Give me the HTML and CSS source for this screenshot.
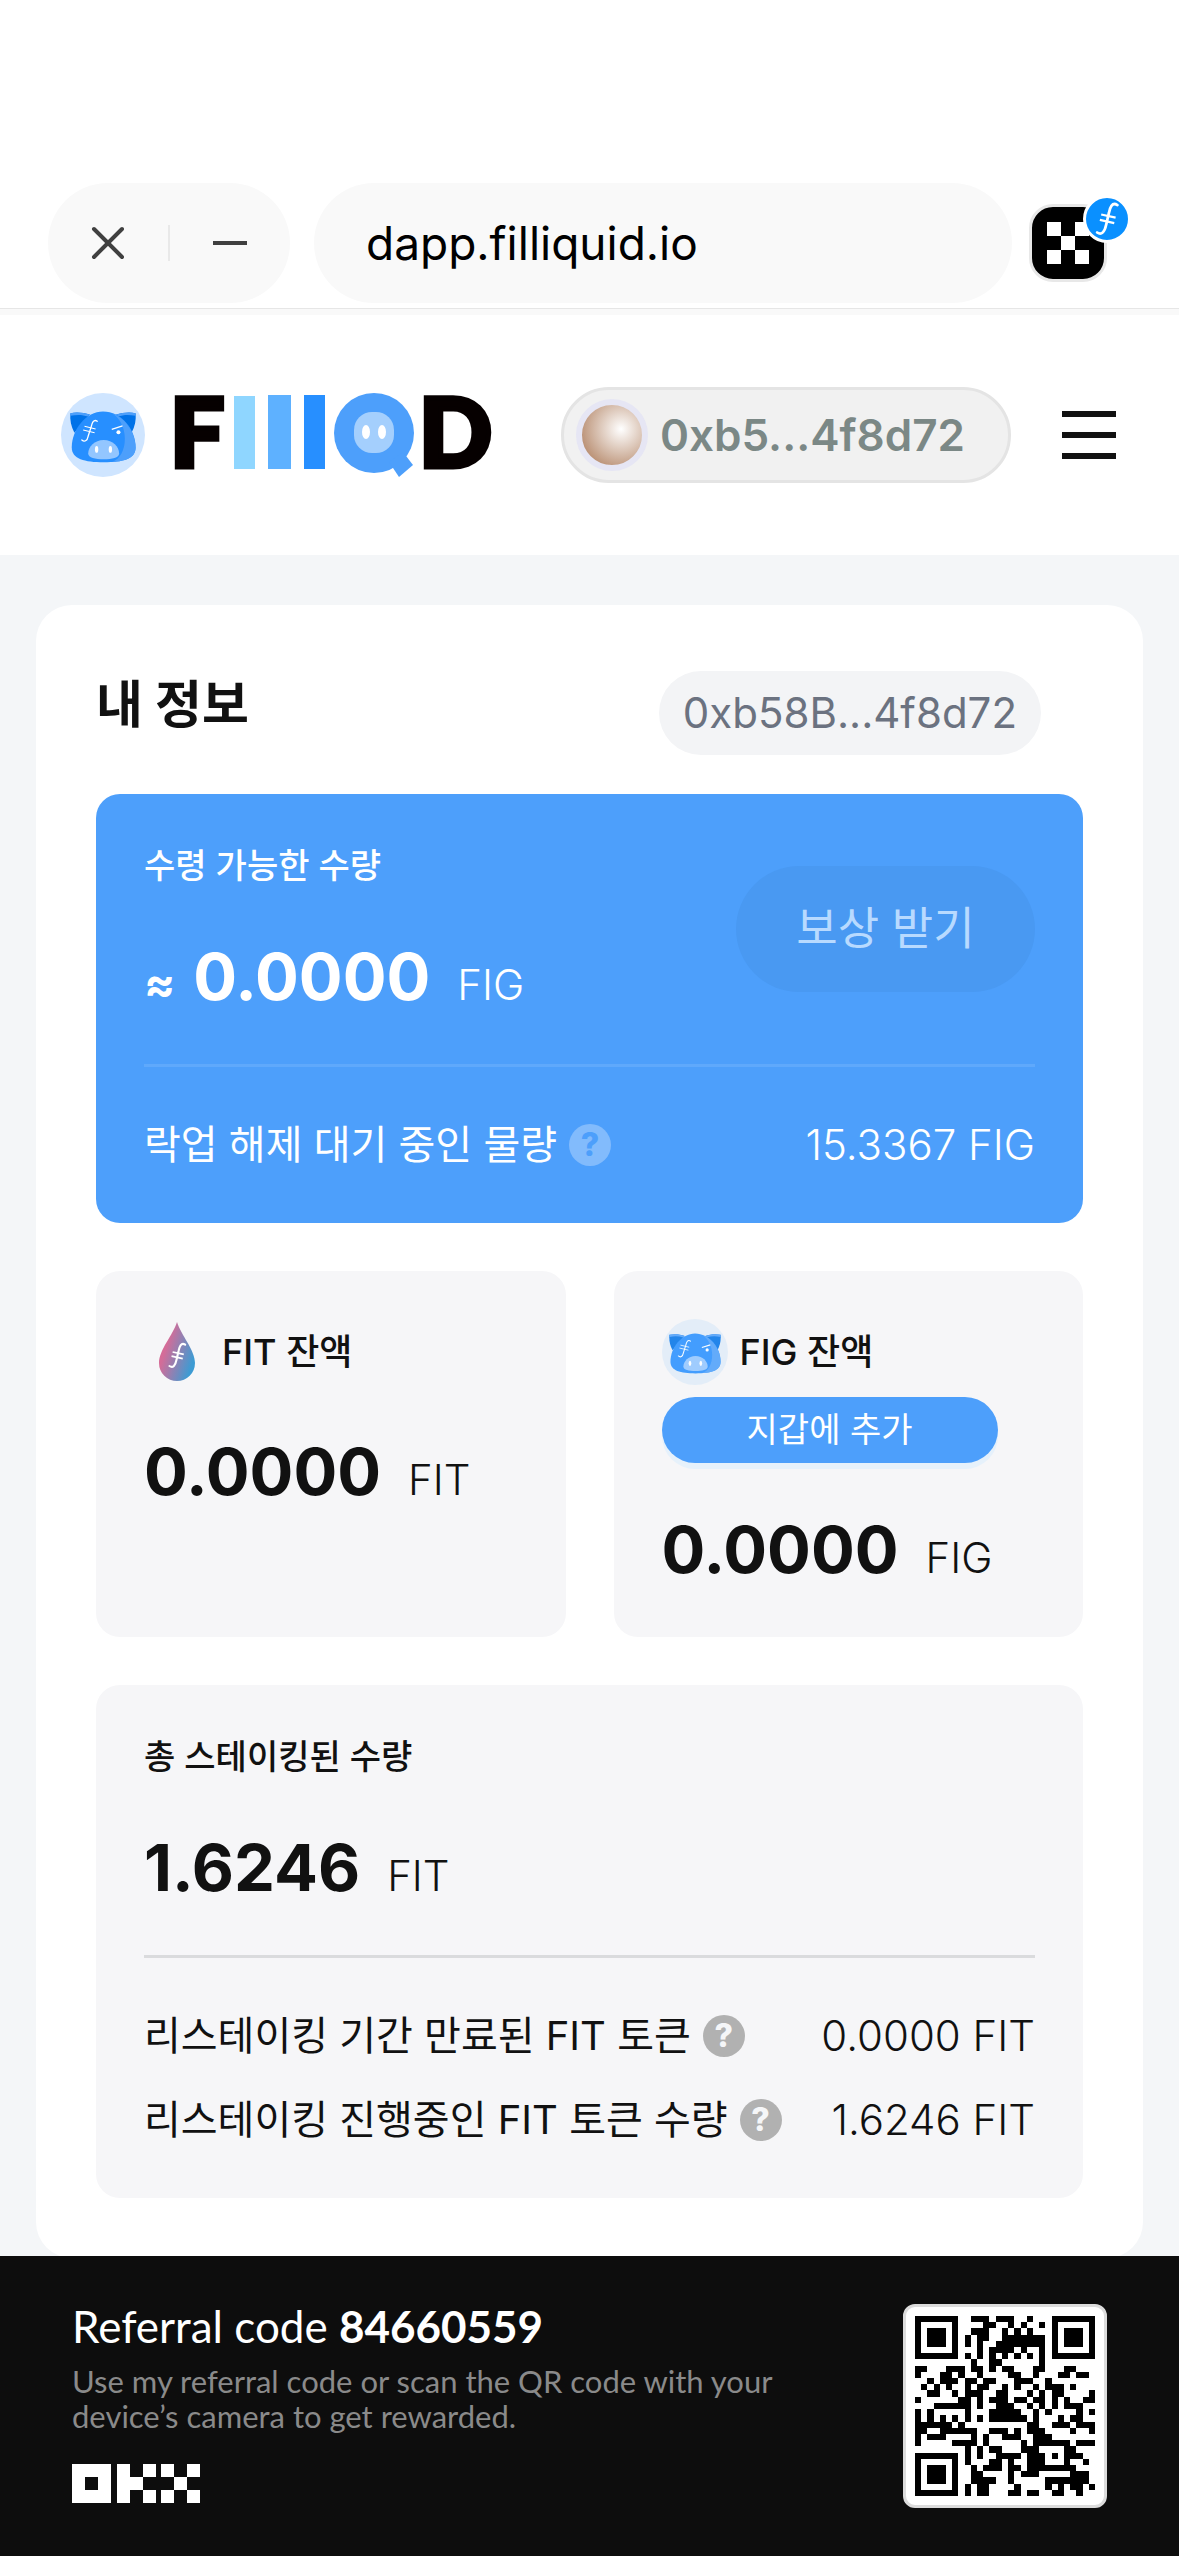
FILE: index.html
```html
<!DOCTYPE html>
<html lang="ko">
<head>
    <meta charset="UTF-8">
    <meta name="viewport" content="width=device-width, initial-scale=1.0">
    <title>FILLiquid</title>
    <link rel="stylesheet" href="styles.css">
</head>
<body>

    <!-- Shared icons -->
    <svg class="sprite" aria-hidden="true">
        <symbol id="fil" viewBox="0 0 60 80">
            <path d="M52 9C40 1 35 16 33 27L27 53C24 68 17 77 7 70" fill="none" stroke="currentColor" stroke-width="6" stroke-linecap="round"/>
            <path d="M16 30L48 37M13 42L45 49" stroke="currentColor" stroke-width="5"/>
        </symbol>
        <symbol id="pig" viewBox="0 0 250 250">
            <path d="M28 60C45 56 68 58 86 64L40 118C30 100 26 80 28 60Z" class="pig-ear"/>
            <path d="M222 60C205 56 182 58 164 64L210 118C220 100 224 80 222 60Z" class="pig-ear"/>
            <path d="M28 60C45 56 68 58 86 64L80 70C64 64 46 64 28 68Z" class="pig-light"/>
            <path d="M222 60C205 56 182 58 164 64L170 70C186 64 204 64 222 68Z" class="pig-light"/>
            <path d="M125 55C75 55 32 108 32 162C32 196 70 206 127 206C185 206 222 196 222 162C222 108 180 55 125 55Z" class="pig-head"/>
            <path d="M153 61C195 75 222 122 222 162C222 192 194 203 152 205C176 196 190 170 190 136C190 104 176 76 153 61Z" class="pig-light"/>
            <path d="M127 140C100 140 81 160 81 180C81 193 102 197 127 197C152 197 173 193 173 180C173 160 154 140 127 140Z" class="pig-snout"/>
            <ellipse cx="106" cy="168" rx="5" ry="10" fill="#fff"/>
            <ellipse cx="147" cy="168" rx="5" ry="10" fill="#fff"/>
            <circle cx="171" cy="117" r="6" fill="#fff"/>
            <path d="M151 108L183 98" stroke="#fff" stroke-width="4"/>
            <path d="M108 84C97 76 92 90 90 100L81 128C78 143 70 147 62 140" fill="none" stroke="#fff" stroke-width="4" stroke-linecap="round"/>
            <path d="M70 99L103 107M66 110L100 118" stroke="#fff" stroke-width="3"/>
        </symbol>
    </svg>

    <!-- Browser bar -->
    <div class="browser-bar">
        <div class="window-controls">
            <button type="button" aria-label="Close">
                <svg width="34" height="34" viewBox="0 0 34 34"><path d="M3 3L31 31M31 3L3 31" stroke="#404040" stroke-width="4" stroke-linecap="round"/></svg>
            </button>
            <button type="button" aria-label="Minimize">
                <svg width="36" height="34" viewBox="0 0 36 34"><path d="M1 17H35" stroke="#404040" stroke-width="4"/></svg>
            </button>
        </div>
        <input class="address" type="text" value="dapp.filliquid.io" aria-label="Address">
        <button type="button" class="wallet-app" aria-label="Wallet">
            <svg width="72" height="72" viewBox="0 0 72 72"><path d="M15 15h14v14h14v14h14v14h-14v-14h-14v14h-14v-14h14v-14h-14zM43 15h14v14h-14z" fill="#fff"/></svg>
            <span class="network">
                <svg width="27" height="36"><use href="#fil"/></svg>
            </span>
        </button>
    </div>
    <div class="load-track"></div>

    <!-- Site header -->
    <header class="site-header">
        <a href="#" class="brand" aria-label="FILLiquid">
            <svg class="pig-badge" width="84" height="84"><use href="#pig"/></svg>
            <svg width="340" height="150" viewBox="-10 -30 340 150">
                <text x="-5" y="77" class="wordmark">F</text>
                <rect x="59" y="6" width="21" height="73" fill="#8fd6ff"/>
                <rect x="93" y="5" width="23" height="74" fill="#5eb1ff"/>
                <rect x="129" y="5" width="21" height="74" fill="#278fff"/>
                <circle cx="199" cy="43" r="40" fill="#4d9ffb"/>
                <path d="M214 72L224 87L238 75L228 62Z" fill="#4d9ffb"/>
                <rect x="179" y="22" width="40" height="41" rx="18" fill="#a4cffd"/>
                <ellipse cx="191" cy="42" rx="4" ry="7" fill="#fff"/>
                <ellipse cx="207" cy="42" rx="4" ry="7" fill="#fff"/>
                <text x="244" y="77" class="wordmark">D</text>
            </svg>
        </a>
        <button type="button" class="account">
            <span class="avatar"></span>
            0xb5...4f8d72
        </button>
        <button type="button" class="menu" aria-label="Menu">
            <svg width="54" height="48" viewBox="0 0 54 48"><path d="M0 3H54M0 24H54M0 45H54" stroke="#111" stroke-width="6"/></svg>
        </button>
    </header>

    <main>
        <section class="card">
            <div class="card-head">
                <h1>내 정보</h1>
                <span class="chip">0xb58B...4f8d72</span>
            </div>

            <!-- Claimable rewards -->
            <div class="panel panel-blue">
                <div class="claim">
                    <div>
                        <h2>수령 가능한 수량</h2>
                        <p class="amount"><span class="approx">≈</span><strong>0.0000</strong><span class="unit">FIG</span></p>
                    </div>
                    <button type="button" class="claim-btn" disabled>보상 받기</button>
                </div>
                <hr>
                <div class="row">
                    <span class="label">락업 해제 대기 중인 물량</span>
                    <button type="button" class="help" aria-label="Help">?</button>
                    <span class="value">15.3367 FIG</span>
                </div>
            </div>

            <!-- Balances -->
            <div class="balances">
                <div class="panel">
                    <h2 class="token">
                        <svg width="66" height="66" viewBox="0 0 66 66">
                            <defs>
                                <linearGradient id="drop" x1="0" y1="0.3" x2="1" y2="0.8">
                                    <stop offset="0.2" stop-color="#d46c98"/>
                                    <stop offset="0.9" stop-color="#3d9bd3"/>
                                </linearGradient>
                            </defs>
                            <path d="M33 3C37 16 51 31 51 44A18 18 0 0 1 15 44C15 31 29 16 33 3Z" fill="url(#drop)"/>
                            <use href="#fil" x="23" y="22" width="21" height="29" color="#fff"/>
                        </svg>
                        FIT 잔액
                    </h2>
                    <p class="amount"><strong>0.0000</strong><span class="unit">FIT</span></p>
                </div>
                <div class="panel">
                    <h2 class="token">
                        <svg class="pig-badge soft" width="66" height="66"><use href="#pig"/></svg>
                        FIG 잔액
                    </h2>
                    <button type="button" class="add-btn">지갑에 추가</button>
                    <p class="amount"><strong>0.0000</strong><span class="unit">FIG</span></p>
                </div>
            </div>

            <!-- Staking -->
            <div class="panel">
                <h2>총 스테이킹된 수량</h2>
                <p class="amount"><strong>1.6246</strong><span class="unit">FIT</span></p>
                <hr>
                <div class="row">
                    <span class="label">리스테이킹 기간 만료된 FIT 토큰</span>
                    <button type="button" class="help" aria-label="Help">?</button>
                    <span class="value">0.0000 FIT</span>
                </div>
                <div class="row">
                    <span class="label">리스테이킹 진행중인 FIT 토큰 수량</span>
                    <button type="button" class="help" aria-label="Help">?</button>
                    <span class="value">1.6246 FIT</span>
                </div>
            </div>
        </section>
    </main>

    <!-- Referral -->
    <footer>
        <div class="referral">
            <p class="code">Referral code <strong>84660559</strong></p>
            <p class="hint">Use my referral code or scan the QR code with your device’s camera to get rewarded.</p>
            <svg width="128" height="39" viewBox="0 0 128 39" fill="#fff" role="img" aria-label="OKX">
                <path d="M0 0h39v39h-39zM13 13v13h13v-13z" fill-rule="evenodd"/>
                <path d="M45 0h13v13h13v13h-13v13h-13zM71 0h13v13h-13zM71 26h13v13h-13z"/>
                <path d="M89 0h13v13h-13zM115 0h13v13h-13zM102 13h13v13h-13zM89 26h13v13h-13zM115 26h13v13h-13z"/>
            </svg>
        </div>
        <div class="qr">
            <svg id="qr" viewBox="0 0 29 29" shape-rendering="crispEdges" role="img" aria-label="QR code"></svg>
        </div>
    </footer>

    <script>
        const rows = [
            "#######..###.###..#...#######",
            "#.....#....##..#.#..#.#.....#",
            "#.###.#..###..#.#.#...#.###.#",
            "#.###.#.#.##..#######.#.###.#",
            "#.###.#.#.#..########.#.###.#",
            "#.....#...#.####.#..#.#.....#",
            "#######.#.#.#.#.#.#.#.#######",
            ".........#..##......#........",
            "##...###.##.#.##...##...##...",
            "#...##.#..#....##..#...##.##.",
            "..#.###.##.##...###..#.......",
            ".#.#.#..#.##..#.#..#.###.#...",
            "..##..#.###..##...#.#.##....#",
            "#......##.#.###.##.##.#.#..##",
            "...######.#..###..#.#.#.###..",
            "#.#.....#...#####..#.#....#.#",
            "#.#.#.#.#.#.######.#...#.##..",
            "######.#..........##..###.###",
            "##..######..###.#.###....#..#",
            "#.###....#.#..###..###.......",
            "#.....####.#.....#.######.###",
            "........#.#.##...###....##...",
            "#######.#.#..####.###.#.###..",
            "#.....#.#...##.#..###...#..#.",
            "#.###.#..#.###.##.########...",
            "#.###.#..##....#.###.....###.",
            "#.###.#..####..#.....#######.",
            "#.....#.#.##....#....#.#.##.#",
            "#######.#.##...##.##..##..#.."
        ];
        let d = "";
        rows.forEach((row, y) => {
            [...row].forEach((cell, x) => {
                if (cell === "#") d += `M${x} ${y}h1v1h-1z`;
            });
        });
        document.getElementById("qr").innerHTML = `<path d="${d}"/>`;
    </script>
</body>
</html>
```
FILE: styles.css
```css
* {
    box-sizing: border-box;
}

body {
    margin: 0;
    height: 100vh;
    display: flex;
    flex-direction: column;
    background: #f4f6f8;
    color: #111;
    font-family: Inter, "Noto Sans CJK KR", sans-serif;
}

h1, h2, p {
    margin: 0;
}

button {
    border: none;
    padding: 0;
    background: none;
    font-family: inherit;
    cursor: pointer;
}

svg {
    display: block;
}

.sprite {
    position: absolute;
    width: 0;
    height: 0;
}

/* Browser bar */
.browser-bar {
    display: flex;
    align-items: center;
    padding: 183px 72px 5px 48px;
    background: #fff;
    border-bottom: 1px solid #e6e6e6;
}

.window-controls {
    display: flex;
    align-items: center;
    width: 242px;
    height: 120px;
    border-radius: 60px;
    background: #f9f9f9;
}

.window-controls button {
    display: flex;
    flex: 1;
    height: 36px;
    align-items: center;
    justify-content: center;
}

.window-controls button:last-child {
    border-left: 2px solid #e9e9e9;
}

.address {
    flex: 1;
    min-width: 0;
    height: 120px;
    margin: 0 17px 0 24px;
    padding: 0 52px;
    border: none;
    border-radius: 60px;
    background: #f9f9f9;
    color: #000;
    font: 400 46px/60px Inter, sans-serif;
}

.wallet-app {
    position: relative;
    border: 3px solid #e8e8e8;
    border-radius: 24px;
    background: #000;
}

.network {
    position: absolute;
    top: -12px;
    right: -27px;
    display: flex;
    align-items: center;
    justify-content: center;
    width: 48px;
    height: 48px;
    border: 3px solid #fff;
    border-radius: 50%;
    background: #0a90ff;
    color: #fff;
}

.load-track {
    height: 6px;
    background: #f9f9f9;
}

/* Site header */
.site-header {
    display: flex;
    align-items: center;
    height: 240px;
    padding: 0 63px 0 61px;
    background: #fff;
}

.brand {
    display: flex;
    align-items: center;
    gap: 20px;
    margin-right: auto;
}

.wordmark {
    font: 900 96px Lato, sans-serif;
    fill: #060000;
    stroke: #060000;
    stroke-width: 5px;
}

.pig-badge {
    border-radius: 50%;
    background: #cfe5ff;
}

.pig-ear { fill: #0072e8; }
.pig-head { fill: #278fff; }
.pig-light { fill: #4d9ffb; }
.pig-snout { fill: #93c6ff; }

.soft {
    background: #e3edf8;
}

.soft use {
    opacity: 0.85;
}

.account {
    display: flex;
    align-items: center;
    gap: 12px;
    height: 96px;
    padding: 0 43px 0 12px;
    border: 3px solid #e4e4e4;
    border-radius: 48px;
    background: #f1f1f1;
    color: #7b8886;
    font-size: 44px;
    font-weight: 600;
}

.avatar {
    width: 72px;
    height: 72px;
    border: 6px solid #e6e6f4;
    border-radius: 50%;
    background: radial-gradient(circle at 65% 40%, #fff, #bd957a 75%);
}

.menu {
    margin-left: 51px;
}

/* Content */
main {
    flex: 1;
    min-height: 0;
    overflow: hidden;
    padding: 50px 36px 0;
}

.card {
    display: flex;
    flex-direction: column;
    gap: 48px;
    padding: 60px;
    border-radius: 36px;
    background: #fff;
}

.card-head {
    display: flex;
    justify-content: space-between;
    align-items: flex-start;
    height: 81px;
}

h1 {
    font-size: 51px;
    font-weight: 700;
    line-height: 80px;
}

.chip {
    margin: 6px 42px 0 0;
    padding: 0 24px;
    border-radius: 42px;
    background: #f3f4f6;
    color: #6b7280;
    font-size: 42px;
    line-height: 84px;
}

.panel {
    padding: 48px;
    border-radius: 24px;
    background: #f6f6f8;
}

.panel-blue {
    background: #4d9ffb;
    color: #fff;
}

h2 {
    font-size: 34px;
    font-weight: 500;
    line-height: 48px;
}

.amount {
    display: flex;
    align-items: baseline;
    height: 78px;
    margin-top: 48px;
    line-height: 78px;
}

.amount strong {
    font-size: 65px;
    font-weight: 700;
}

.approx {
    margin-right: 18px;
    font-size: 46px;
    font-weight: 700;
    line-height: 48px;
}

.unit {
    margin-left: 27px;
    font-size: 42px;
    font-weight: 300;
    line-height: 48px;
}

.claim {
    display: flex;
    justify-content: space-between;
    align-items: center;
}

.claim-btn {
    width: 299px;
    height: 126px;
    padding-bottom: 8px;
    border-radius: 63px;
    background: #4999f2;
    color: #b8daff;
    font-size: 45px;
}

hr {
    height: 3px;
    margin: 48px 0;
    border: none;
    background: #dadbdd;
}

.panel-blue hr {
    background: #5fa9fc;
}

.row {
    display: flex;
    align-items: center;
    line-height: 60px;
}

.row + .row {
    margin-top: 24px;
}

.label {
    font-size: 40px;
    font-weight: 400;
}

.help {
    width: 42px;
    height: 42px;
    margin-left: 12px;
    border-radius: 50%;
    background: #b1b1b1;
    color: #f5f6f8;
    font-size: 32px;
    font-weight: 800;
    line-height: 42px;
}

.panel-blue .help {
    background: #82bbfc;
    color: #4d9ffb;
}

.value {
    margin-left: auto;
    font-size: 42px;
    font-weight: 300;
}

.balances {
    display: grid;
    grid-template-columns: 1fr 1fr;
    gap: 48px;
}

.token {
    display: flex;
    align-items: center;
    gap: 12px;
    font-size: 36px;
}

.add-btn {
    display: block;
    width: 90%;
    height: 66px;
    margin-top: 12px;
    padding-bottom: 6px;
    border-radius: 33px;
    background: #4d9ffb;
    box-shadow: 0 6px 0 #e6f1fb;
    color: #fff;
    font-size: 34px;
}

/* Referral */
footer {
    display: flex;
    justify-content: space-between;
    align-items: flex-start;
    height: 300px;
    padding: 48px 72px;
    background: #0d0d0d;
    color: #fff;
    font-family: Lato, sans-serif;
}

.referral {
    width: 730px;
}

.code {
    font-size: 44px;
    line-height: 44px;
}

.code strong {
    font-weight: 700;
}

.hint {
    margin: 16px 0 30px;
    color: #8a8a8a;
    font-size: 31px;
    line-height: 35px;
}

.qr {
    width: 204px;
    height: 204px;
    padding: 9px;
    border: 3px solid #dcdcdc;
    border-radius: 12px;
    background: #fff;
}
```
